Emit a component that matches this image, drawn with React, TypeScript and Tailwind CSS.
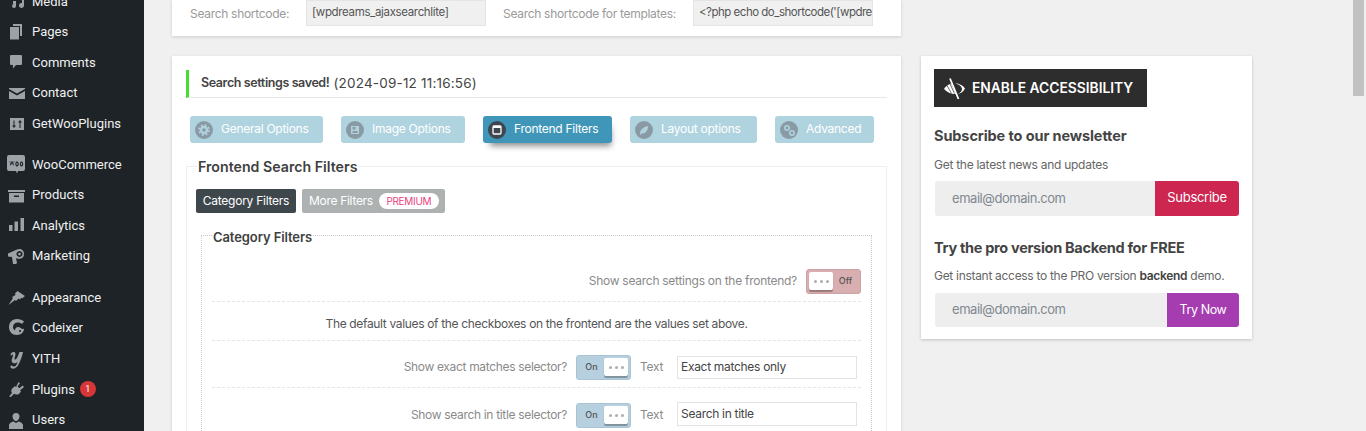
import React from "react";

const ui = "font-['Inter','Liberation_Sans',sans-serif]";

function Ico({ children }: { children: React.ReactNode }) {
  return (
    <svg viewBox="0 0 20 20" className="w-[20px] h-[20px] fill-[#9ca2a7] shrink-0">
      {children}
    </svg>
  );
}

const icons: Record<string, React.ReactNode> = {
  Media: <path d="M1 2h10v7H1zM13 2h4v12.500a2.500 2.500 0 1 1-2-2.400V5h-2zM6 10h3v5a2 2 0 1 1-2-2h-1z" />,
  Pages: <path fillRule="evenodd" d="M6 2h9v12h-2V4H6zM3 5h9v12.500H3z" />,
  Comments: <path d="M4 3h10a1 1 0 0 1 1 1v8a1 1 0 0 1-1 1H9l-3 3.500V13H4a1 1 0 0 1-1-1V4a1 1 0 0 1 1-1z" />,
  Contact: <path d="M2 5h16v1L10 10.500 2 6zM2 8l8 4.500L18 8v8H2z" />,
  GetWooPlugins: <path fillRule="evenodd" d="M3 4h14v12H3zM6.500 6.500v5H5l2 2.500 2-2.500H7.500v-5zM13 6l-2 2.500h1.500V14h1V8.500H15z" />,
  WooCommerce: (
    <path fillRule="evenodd" d="M2 1h14a2 2 0 0 1 2 2v12a2 2 0 0 1-2 2h-5l-1 2.500L9 17H2a2 2 0 0 1-2-2V3a2 2 0 0 1 2-2zM2.500 7l1 5 1.500-3 1.200 3 1.300-5H7l-.7 3-1-3h-.7l-1 3L3 7zM10 7.500a1.700 2.500 0 1 0 .01 0zM10 8.800a.6 1.200 0 1 1-.01 0zM14.500 7.500a1.700 2.500 0 1 0 .01 0zM14.500 8.800a.6 1.200 0 1 1-.01 0z" />
  ),
  Products: <path fillRule="evenodd" d="M1 5h17v2H1zM2 8h15v9.500H2zM7 10.500V12h5v-1.500z" />,
  Analytics: <path d="M2 10h3.500v6H2zM7.500 6.500H11V16H7.500zM13.500 3H17v13h-3.500z" />,
  Marketing: (
    <path fillRule="evenodd" d="M1 7.500L10 3.500c3-1.500 7 0 7 4.500s-4 5.500-7 4.500l-1-.3 1 4.800L9 18H6l-1-7-4-.500zM12.500 5a3 3 0 1 0 .01 0zM12.500 6.700a1.300 1.300 0 1 1-.01 0z" />
  ),
  Appearance: <path d="M10.500 3l7.500 5-3 2.500-1-.7-1 1.700-1.500-1L9 13l-1-1-6.500 5 4.500-7L5 9l3.500-2L8 5.500z" />,
  Codeixer: (
    <path fillRule="evenodd" d="M10 1c3 0 5.500 1 7 2.500L15 6c-1-1-2.500-1.500-4-1.500-3 0-5 2-5 4.500 0 1.500.7 2.700 2 3.500 0-2 1.300-3.500 3-3.500 2.500 0 3 2 5 2 .5 0 1-.2 1-.2-.1 3.700-3 6.200-7 6.200-5 0-8-3.500-8-8 0-5 3.500-8 8-8zM13 12a1 1 0 1 0 .01 0z" />
  ),
  YITH: (
    <path d="M3.500 5c1.500-2.500 5-3 5 0 0 2-1.500 4-.8 5.500 1.500.5 3.300-3 4-5.500l.8-2H16c-1 5-3 10-5 13.500-1.500 2.500-4 3.500-6 3-2-.5-2-3-.5-3 1.200 0 1.500 1.500 3 1 1.500-.5 2.300-2 3-4.500-1.500 1.500-4.500 2-5.500 0-1-2.500 1-5 1-6.500 0-1.500-1-1.500-2 .5z" />
  ),
  Plugins: <path d="M11.500 3l1.500 1.200L10.500 7.500l2 1.700L15.500 6.500 17 8l-4 3.500 1 1-2 2.500c-2 1-4 .7-5-.2L4 18l-2-.5L5 14c-1-1-1-3 .2-4.500L8 7l1 1z" />,
  Users: <path d="M9 3a3.500 3.500 0 0 1 3.500 3.500c0 2-1.500 4.500-3.500 4.500S5.500 8.500 5.500 6.500A3.500 3.500 0 0 1 9 3zM2 15c0-1.500 2-3 4.500-3.500L9 13l2.500-1.500C14 12 16 13.500 16 15v4H2z" />,
};

function Item({ name, badge }: { name: string; badge?: string }) {
  return (
    <li className="h-[30.6px] flex items-center pl-[7px] text-[#f0f0f1] text-[13px]">
      <Ico>{icons[name]}</Ico>
      <span className="ml-[5px]">{name}</span>
      {badge && (
        <span className="ml-[5px] w-[16px] h-[16px] rounded-full bg-[#d63638] text-white text-[9px] flex items-center justify-center">
          {badge}
        </span>
      )}
    </li>
  );
}

function Sidebar() {
  return (
    <aside className="w-[144px] shrink-0 bg-[#1d2327] font-['Roboto','Liberation_Sans',sans-serif] overflow-hidden">
      <ul className="-mt-[14px]">
        <Item name="Media" />
        <Item name="Pages" />
        <Item name="Comments" />
        <Item name="Contact" />
        <Item name="GetWooPlugins" />
        <li className="h-[10px]" />
        <Item name="WooCommerce" />
        <Item name="Products" />
        <Item name="Analytics" />
        <Item name="Marketing" />
        <li className="h-[11px]" />
        <Item name="Appearance" />
        <Item name="Codeixer" />
        <Item name="YITH" />
        <Item name="Plugins" badge="1" />
        <Item name="Users" />
      </ul>
    </aside>
  );
}

function TabIcon({ kind }: { kind: string }) {
  return (
    <svg viewBox="0 0 18 18" className="w-[18px] h-[18px] shrink-0">
      <circle cx="9" cy="9" r="9" fill={kind === "frontend" ? "#3f4650" : "#8a9aa5"} />
      {kind === "gear" && (
        <>
          <circle cx="9" cy="9" r="4.200" fill="#b0d2df" />
          <circle cx="9" cy="9" r="5" fill="none" stroke="#b0d2df" strokeWidth="1.500" strokeDasharray="2 1.930" />
          <circle cx="9" cy="9" r="1.800" fill="#8a9aa5" />
        </>
      )}
      {kind === "image" && (
        <path fillRule="evenodd" d="M5 5h8v8H5zM6.500 6v2.500h3V6zM6.500 10v2h5v-2z" fill="#b0d2df" />
      )}
      {kind === "frontend" && (
        <rect x="5" y="5" width="8" height="8" rx="1" fill="none" stroke="#fff" strokeWidth="1.300" />
      )}
      {kind === "frontend" && <rect x="5" y="5" width="8" height="2" fill="#fff" />}
      {kind === "leaf" && <path d="M5 13c0-4 3-7 8-8 0 5-3 8-6.500 7.500L5.500 14z" fill="#b0d2df" />}
      {kind === "gears" && (
        <>
          <circle cx="7" cy="7" r="2.200" fill="none" stroke="#b0d2df" strokeWidth="1.500" />
          <circle cx="12" cy="12" r="2.200" fill="none" stroke="#b0d2df" strokeWidth="1.500" />
        </>
      )}
    </svg>
  );
}

function Tab({ label, kind, active, w }: { label: string; kind: string; active?: boolean; w: string }) {
  return (
    <div
      className={
        w +
        " h-[27px] rounded-[3px] flex items-center pl-[5px] text-[12px] text-white " +
        (active ? "bg-[#3f96b9] shadow-[3px_7px_6px_-4px_rgba(0,0,0,0.45)]" : "bg-[#b0d3e0]")
      }
    >
      <TabIcon kind={kind} />
      <span className="ml-[8px] whitespace-nowrap tracking-[-0.27px] pb-[1px]">{label}</span>
    </div>
  );
}

function Dots() {
  return (
    <span className="flex gap-[3px]">
      <i className="w-[3px] h-[3px] rounded-full bg-[#adadad]" />
      <i className="w-[3px] h-[3px] rounded-full bg-[#adadad]" />
      <i className="w-[3px] h-[3px] rounded-full bg-[#adadad]" />
    </span>
  );
}

function Toggle({ on }: { on: boolean }) {
  const knob = (
    <span className="w-[24px] h-[18px] bg-white rounded-[2px] shadow-[0_2px_1px_rgba(0,0,0,0.3)] flex items-center justify-center">
      <Dots />
    </span>
  );
  const text = (
    <span className="flex-1 text-center text-[9px] font-medium text-[#555]">{on ? "On" : "Off"}</span>
  );
  return (
    <div
      className={
        "w-[55px] h-[25px] rounded-[3px] flex items-center px-[2px] shrink-0 border " +
        (on ? "bg-[#b7d0df] border-[#a9c3d2]" : "bg-[#d9aeb1] border-[#cda2a5]")
      }
    >
      {on ? (
        <>
          {text}
          {knob}
        </>
      ) : (
        <>
          {knob}
          {text}
        </>
      )}
    </div>
  );
}

function SelectorRow({ label, value, h, input, last }: { label: string; value: string; h: string; input: string; last?: boolean }) {
  return (
    <div className={h + " flex items-center justify-end pr-[4px] " + (last ? "" : "border-b border-dashed border-[#e5e5e5]")}>
      <span className="text-[12px] text-[#8a8a8a] mr-[9px] tracking-[-0.33px]">{label}</span>
      <Toggle on />
      <span className="text-[12px] text-[#8a8a8a] ml-[9px] w-[23px] mr-[14px] tracking-[-0.3px]">Text</span>
      <span className={input + " w-[180px] border border-[#e3e3e3] px-[3px] text-[12px] text-[#444] flex items-center bg-white tracking-[-0.3px]"}>
        {value}
      </span>
    </div>
  );
}

function EyeIcon() {
  return (
    <svg viewBox="0 0 24 24" className="w-[24px] h-[24px] shrink-0">
      <path d="M1 12c1.500-2.500 4-4.500 7-5.500l5 10.500c-4 .5-9-1.500-12-5z" fill="#fff" />
      <path d="M4 8.500l4.500 8M7 7l4.500 9.500" stroke="#2d2d2d" strokeWidth="0.700" fill="none" />
      <path d="M12 6.500c4-.5 8 2 10 5-1.500 3-4 5-7 5.500 2-1 4-3 4-5 0-2.500-3.500-5-7-5.500z" fill="#fff" />
      <path d="M7 1.500L15.500 22" stroke="#fff" strokeWidth="1.800" fill="none" />
    </svg>
  );
}

function SignupRow({ btn, cls }: { btn: string; cls: string }) {
  return (
    <div className="flex ml-[1px] w-[304px] rounded-[3px] overflow-hidden">
      <div className="flex-1 bg-[#eeeeee] pl-[17px] flex items-center text-[13px] text-[#808890] tracking-[-0.45px]">email@domain.com</div>
      <div className={cls + " text-white flex items-center justify-center"}>{btn}</div>
    </div>
  );
}

export default function App() {
  return (
    <div className={"h-[431px] w-[1366px] overflow-hidden flex bg-[#f0f0f1] " + ui}>
      <Sidebar />
      <main className="flex-1 pl-[28px] flex gap-[20px] items-start min-w-0">
        <div className="w-[729px] shrink-0">
          <section className="h-[36px] bg-white shadow-[0_1px_3px_rgba(0,0,0,0.15)] flex pl-[18px] text-[12px] text-[#9a9a9a] tracking-[-0.3px]">
            <span className="w-[116px] pt-[5px]">Search shortcode:</span>
            <span className="w-[180px] h-[26px] bg-[#f0f0f0] border border-[#e5e5e5] px-[5px] flex items-center text-[#555] text-[11.5px] whitespace-nowrap tracking-[-0.35px]">
              [wpdreams_ajaxsearchlite]
            </span>
            <span className="w-[207px] pl-[17px] pt-[5px] whitespace-nowrap">Search shortcode for templates:</span>
            <span className="w-[180px] h-[26px] bg-[#f0f0f0] border border-[#e5e5e5] px-[5px] flex items-center text-[#555] text-[11.5px] whitespace-nowrap overflow-hidden tracking-[-0.5px]">
              &lt;?php echo do_shortcode('[wpdre
            </span>
          </section>

          <section className="mt-[20px] h-[400px] bg-white shadow-[0_1px_3px_rgba(0,0,0,0.15)] pt-[14px] px-[14px]">
            <div className="h-[28px] border-l-[3px] border-l-[#43dc2f] border-b border-b-[#e8e8e8] pl-[12px] flex items-center text-[#444]">
              <b className="font-semibold text-[12.5px] tracking-[-0.4px]">Search settings saved!</b>
              <span className="ml-[4px] text-[13.5px] tracking-[0.2px]">(2024-09-12 11:16:56)</span>
            </div>

            <div className="flex mt-[18px] ml-[4px] gap-[18px]">
              <Tab label="General Options" kind="gear" w="w-[133px]" />
              <Tab label="Image Options" kind="image" w="w-[124px]" />
              <Tab label="Frontend Filters" kind="frontend" active w="w-[129px]" />
              <Tab label="Layout options" kind="leaf" w="w-[127px]" />
              <Tab label="Advanced" kind="gears" w="w-[99px]" />
            </div>

            <fieldset className="mt-[13px] border border-[#eeeeee] px-[9px] h-[400px]">
              <legend className="ml-[1px] px-[1px] pt-[2px] text-[14.2px] font-semibold text-[#3f3f3f] leading-[18px]">
                Frontend Search Filters
              </legend>
              <div className="flex gap-[6px] mt-[13px]">
                <div className="w-[100px] h-[24px] rounded-[2px] bg-[#3e474c] text-white text-[12px] flex items-center justify-center tracking-[-0.25px]">
                  Category Filters
                </div>
                <div className="w-[143px] h-[24px] rounded-[2px] bg-[#adb1b1] text-white text-[12px] flex items-center pl-[7px] tracking-[-0.3px]">
                  More Filters
                  <span className="ml-[6px] w-[60px] h-[16px] rounded-full bg-white text-[#ea3f80] text-[10px] flex items-center justify-center">
                    PREMIUM
                  </span>
                </div>
              </div>

              <fieldset className="mt-[12px] mx-[5px] border border-dotted border-[#c9c9c9] px-[10px] h-[300px]">
                <legend className="px-[1px] pt-[4px] text-[13px] tracking-[-0.1px] font-semibold text-[#3f3f3f] leading-[16px]">
                  Category Filters
                </legend>
                <div className="h-[57px] border-b border-dashed border-[#e5e5e5] flex items-center justify-end pt-[16px]">
                  <span className="text-[12px] text-[#8a8a8a] mr-[9px] tracking-[-0.27px]">Show search settings on the frontend?</span>
                  <Toggle on={false} />
                </div>
                <div className="h-[39px] border-b border-dashed border-[#e5e5e5] flex items-center justify-center pt-[6px] text-[12px] text-[#555] tracking-[-0.34px]">
                  The default values of the checkboxes on the frontend are the values set above.
                </div>
                <SelectorRow label="Show exact matches selector?" value="Exact matches only" h="h-[47px] pt-[6px]" input="h-[23px]" />
                <SelectorRow label="Show search in title selector?" value="Search in title" h="h-[47px] pt-[7px]" input="h-[24px] mb-[2px]" last />
              </fieldset>
            </fieldset>
          </section>
        </div>

        <aside className="mt-[56px] w-[331px] h-[283px] shrink-0 bg-white shadow-[0_1px_3px_rgba(0,0,0,0.2)] pt-[13px] pl-[13px]">
          <div className="w-[213px] h-[38px] bg-[#2d2d2d] flex items-center pl-[9px] gap-[5px] text-white text-[13.8px] font-semibold whitespace-nowrap pt-[1px]">
            <EyeIcon />
            ENABLE ACCESSIBILITY
          </div>
          <h3 className="mt-[19px] text-[14.5px] tracking-[-0.1px] font-bold text-[#444] leading-[20px]">Subscribe to our newsletter</h3>
          <p className="mt-[10px] text-[12px] text-[#666] leading-[18px] tracking-[-0.27px]">Get the latest news and updates</p>
          <div className="mt-[7px] h-[35px] flex">
            <SignupRow btn="Subscribe" cls="w-[84px] bg-[#cc2651] text-[13px] tracking-[-0.3px] pb-[1px]" />
          </div>
          <h3 className="mt-[22px] text-[14.5px] font-bold text-[#444] leading-[20px] tracking-[-0.3px]">Try the pro version Backend for FREE</h3>
          <p className="mt-[9px] text-[12px] text-[#666] leading-[18px] tracking-[-0.3px]">
            Get instant access to the PRO version <b className="font-semibold text-[#444]">backend</b> demo.
          </p>
          <div className="mt-[8px] h-[34px] flex">
            <SignupRow btn="Try Now" cls="w-[72px] bg-[#a53cb0] text-[12.5px] tracking-[-0.4px]" />
          </div>
        </aside>

        <div className="ml-auto mr-[2px] w-[11px] h-[96px] bg-[#c1c1c1] shrink-0" />
      </main>
    </div>
  );
}
